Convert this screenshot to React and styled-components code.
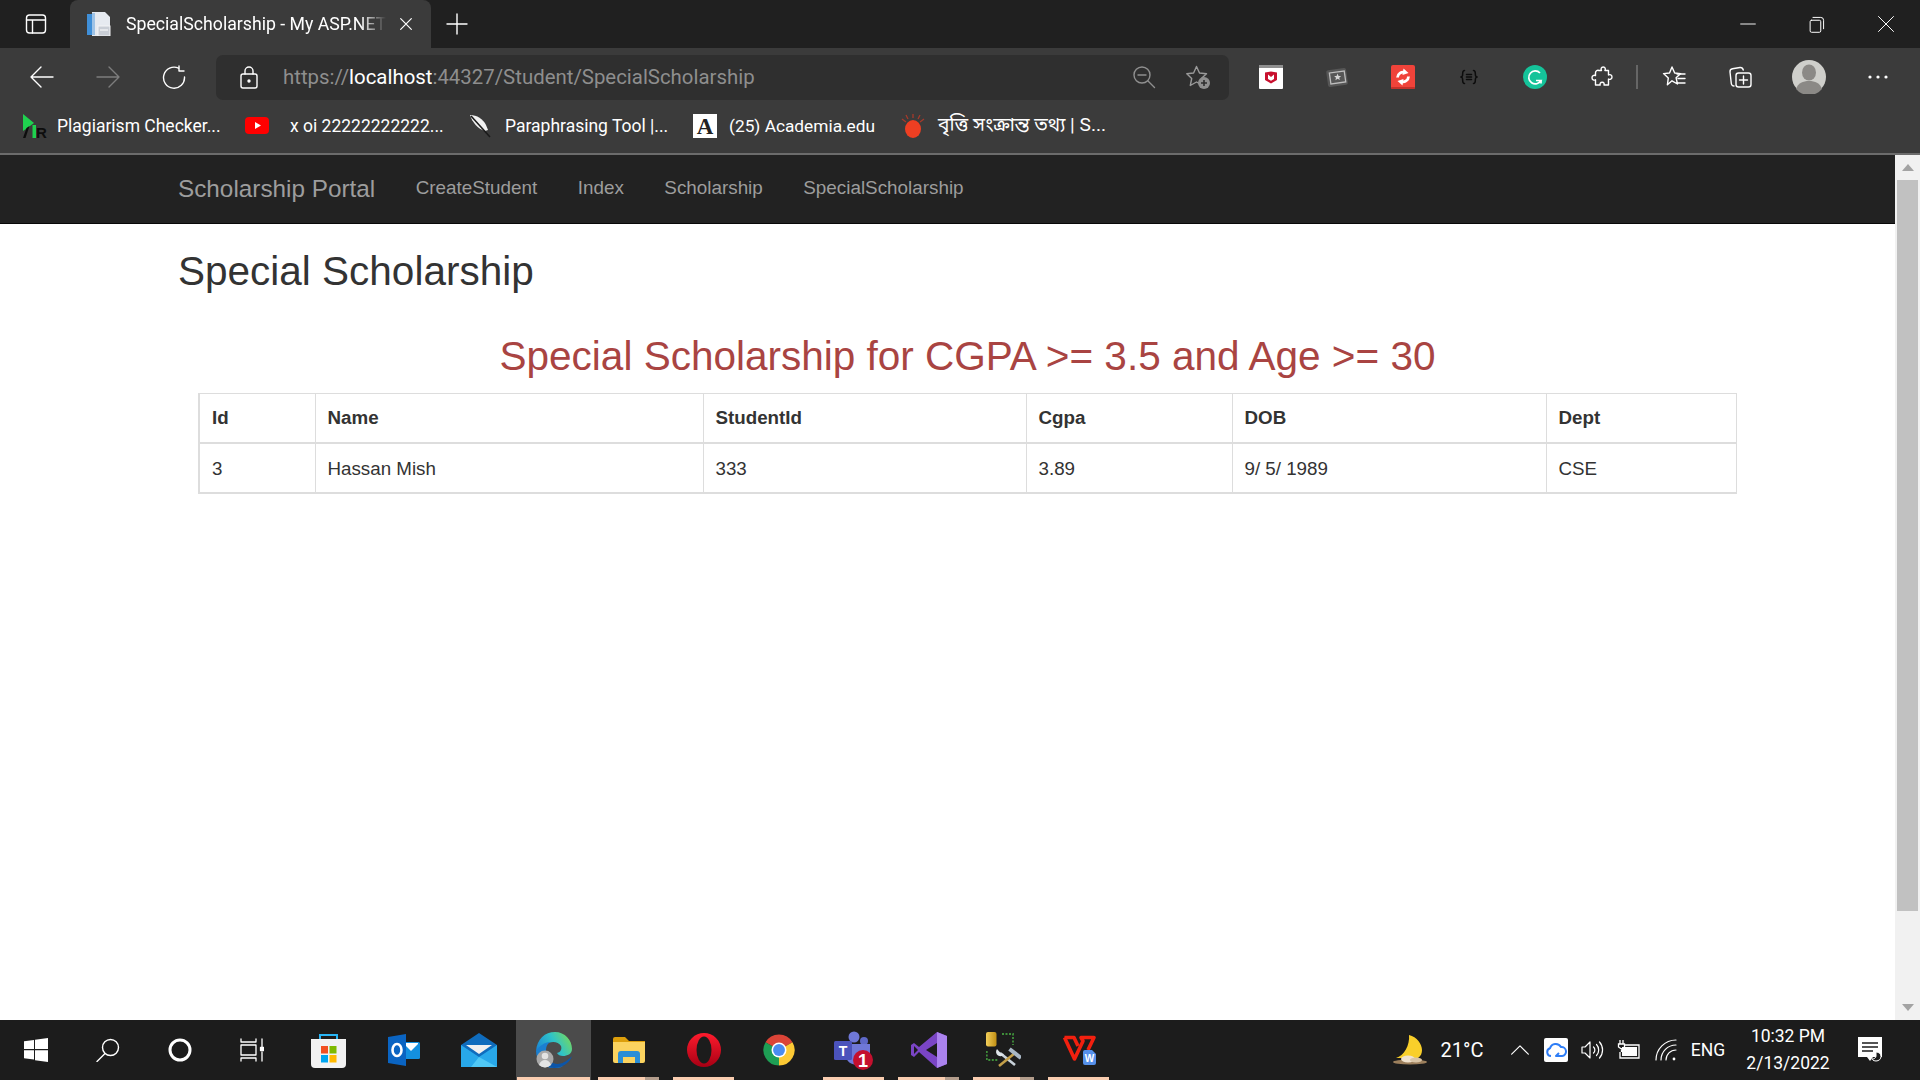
import React from 'react';
import styled, { createGlobalStyle } from 'styled-components';

const GlobalStyle = createGlobalStyle`
  html, body {
    margin: 0;
    padding: 0;
    background: #fff;
    overflow: hidden;
  }
  * {
    box-sizing: border-box;
  }
`;

const Page = styled.div`
  height: 100vh;
  display: flex;
  flex-direction: column;
  overflow: hidden;
  font-family: "Liberation Sans", Arial, sans-serif;
`;

/* browser chrome */

const TitleBar = styled.div`
  height: 48px;
  flex: none;
  display: flex;
  background: #202020;
`;

const TabsButton = styled.div`
  width: 70px;
  padding-left: 24px;
  display: flex;
  align-items: center;
`;

const Tab = styled.div`
  width: 361px;
  padding-left: 17px;
  display: flex;
  align-items: center;
  background: #3b3b3b;
  border-radius: 8px 8px 0 0;
`;

const TabTitle = styled.div`
  width: 260px;
  margin-left: 15px;
  overflow: hidden;
  white-space: nowrap;
  color: #fff;
  font: 17.7px Roboto, sans-serif;
  -webkit-mask-image: linear-gradient(to right, #000 90%, transparent 100%);
  mask-image: linear-gradient(to right, #000 90%, transparent 100%);
`;

const TabClose = styled.div`
  width: 40px;
  display: flex;
  justify-content: center;
`;

const NewTab = styled.div`
  width: 52px;
  display: flex;
  align-items: center;
  justify-content: center;
`;

const Spacer = styled.div`
  flex: 1;
`;

const WindowButton = styled.div`
  width: 69px;
  display: flex;
  align-items: center;
  justify-content: center;
`;

const Toolbar = styled.div`
  height: 58px;
  flex: none;
  padding: 0 9px;
  display: flex;
  align-items: center;
  background: #3b3b3b;
`;

const ToolButton = styled.div`
  width: ${p => p.$w || 66}px;
  flex: none;
  display: flex;
  align-items: center;
  justify-content: center;
`;

const ToolDivider = styled.div`
  width: 2px;
  height: 24px;
  margin-right: 3px;
  flex: none;
  background: #666;
`;

const AddressBar = styled.div`
  flex: 1;
  height: 45px;
  margin: 0 9px;
  padding: 0 19px 0 21px;
  display: flex;
  align-items: center;
  background: #2f2f2f;
  border-radius: 7px;
`;

const Url = styled.div`
  flex: 1;
  margin-left: 22px;
  color: #8e8e8e;
  font: 20.4px Roboto, sans-serif;
  white-space: nowrap;
`;

const UrlHost = styled.span`
  color: #fff;
`;

const AddressActions = styled.div`
  display: flex;
  gap: 30px;
`;

const BookmarkBar = styled.div`
  height: 49px;
  flex: none;
  padding: 0 0 7px 21px;
  display: flex;
  align-items: center;
  gap: 25px;
  background: #3b3b3b;
  border-bottom: 2px solid #6c6c6c;
`;

const Bookmark = styled.div`
  display: flex;
  align-items: center;
  gap: ${p => p.$gap || 12}px;
`;

const BookmarkLabel = styled.span`
  width: ${p => p.$w}px;
  color: #fff;
  font: ${p => p.$size || 17.5}px Roboto, "Noto Sans", "Noto Sans Bengali", sans-serif;
  white-space: nowrap;
`;

/* the page inside the browser */

const Viewport = styled.div`
  flex: 1;
  min-height: 0;
  display: flex;
  background: #fff;
`;

const Site = styled.div`
  flex: 1;
  min-width: 0;
`;

const Navbar = styled.nav`
  height: 69px;
  padding: 0 0 2px 178px;
  display: flex;
  align-items: center;
  gap: 40.5px;
  background: #222;
  border-bottom: 1px solid #080808;
`;

const Brand = styled.a`
  padding-top: 2px;
  color: #9d9d9d;
  font-size: 24.3px;
`;

const NavLink = styled.a`
  color: #9d9d9d;
  font-size: 18.85px;
`;

const Content = styled.main`
  padding: 25px 138px 0 178px;
  color: #333;
`;

const PageTitle = styled.h2`
  margin: 0 0 41px;
  font-size: 40.5px;
  line-height: 44px;
  font-weight: 400;
`;

const SubTitle = styled.h2`
  margin: 0 0 15px;
  color: #a94442;
  font-size: 40.5px;
  line-height: 44px;
  font-weight: 400;
  text-align: center;
`;

const Table = styled.table`
  width: 1537px;
  margin: 0 20px;
  table-layout: fixed;
  border-collapse: collapse;
  font-size: 18.75px;
  border: 1px solid #ddd;
  border-left-width: 2px;
  border-bottom-width: 2px;
`;

const Col = styled.col`
  width: ${p => p.$w}px;
`;

const Th = styled.th`
  height: 49px;
  padding: 1px 11px 0 12px;
  text-align: left;
  font-weight: 700;
  border: 1px solid #ddd;
  border-bottom-width: 2px;
`;

const Td = styled.td`
  height: 50px;
  padding: 2px 11px 0 12px;
  border: 1px solid #ddd;
  border-bottom-width: 2px;
`;

const Scrollbar = styled.div`
  width: 25px;
  flex: none;
  display: flex;
  flex-direction: column;
  align-items: center;
  background: #f1f1f1;
`;

const ScrollArrow = styled.div`
  height: 25px;
  flex: none;
  display: flex;
  align-items: center;
  justify-content: center;
  margin-top: ${p => (p.$end ? 'auto' : 0)};
`;

const ScrollThumb = styled.div`
  width: 21px;
  height: 731px;
  flex: none;
  background: #c1c1c1;
`;

/* windows taskbar */

const Taskbar = styled.footer`
  height: 60px;
  flex: none;
  display: flex;
  background: #1c1c1c;
`;

const ShellButton = styled.div`
  width: 72px;
  display: flex;
  align-items: center;
  justify-content: center;
`;

const AppList = styled.div`
  margin-left: 3px;
  display: flex;
`;

const AppButton = styled.div`
  position: relative;
  width: 75px;
  display: flex;
  align-items: center;
  justify-content: center;
  background: ${p => (p.$active ? '#4b4b4b' : 'transparent')};

  &::after {
    content: '';
    display: ${p => (p.$running ? 'block' : 'none')};
    position: absolute;
    bottom: 0;
    left: ${p => (p.$active ? 1 : 7)}px;
    right: ${p => (p.$active ? 1 : 7)}px;
    height: 3px;
    background: ${p =>
      p.$stacked
        ? 'linear-gradient(to right, #f9cdb0 77%, #b39d8c 77%)'
        : '#f9cdb0'};
  }
`;

const Tray = styled.div`
  margin-left: auto;
  padding-right: 35px;
  display: flex;
  align-items: center;
`;

const TrayItem = styled.div`
  width: ${p => p.$w || 30}px;
  margin-left: ${p => p.$ml || 6}px;
  display: flex;
  align-items: center;
  justify-content: center;
  color: #fff;
  font: ${p => p.$size || 18}px Roboto, sans-serif;
  white-space: nowrap;
`;

const Clock = styled.div`
  width: 100px;
  margin-left: 13px;
  color: #fff;
  font: 17.5px/27px Roboto, sans-serif;
  text-align: center;
`;

/* icons */

const Line = ({ size = 24, color = '#fff', width = 1.4, children }) => (
  <svg
    width={size}
    height={size}
    viewBox="0 0 24 24"
    fill="none"
    stroke={color}
    strokeWidth={width}
    strokeLinecap="round"
    strokeLinejoin="round"
  >
    {children}
  </svg>
);

const Art = ({ w = 24, h = 24, box, children }) => (
  <svg width={w} height={h} viewBox={box || `0 0 ${w} ${h}`}>
    {children}
  </svg>
);

const TabsIcon = () => (
  <Line>
    <rect x="2.5" y="3" width="19" height="18" rx="3" />
    <path d="M2.5 8h19M8.5 8v13" />
  </Line>
);

const PageFavicon = () => (
  <Art>
    <rect x="0" y="2" width="7" height="21" fill="#3f8fd8" />
    <path d="M5 0h13l5 5v19H5z" fill="#e6eaf0" />
    <rect x="5" y="1" width="3" height="22" fill="#9fc3e6" />
    <rect x="11" y="14" width="12" height="10" fill="#c9ced6" stroke="#f3f4f6" />
    <path d="M13 18h8" stroke="#fff" />
  </Art>
);

const ShieldTileIcon = () => (
  <Art>
    <rect width="24" height="24" rx="1" fill="#fff" />
    <rect width="24" height="3" fill="#8f8f8f" />
    <path d="M6 7.500l6-1 6 1V15l-6 3.500L6 15z" fill="#c8102e" />
    <path d="M9 9.500l3 2.500 3-2.500v4.500l-3 1.800L9 14z" fill="#fff" />
  </Art>
);

const StarPhotoIcon = () => (
  <Art>
    <rect x="2" y="4" width="20" height="17" rx="2" fill="#565656" transform="rotate(-8 12 12)" />
    <rect x="5" y="7" width="15" height="11" fill="none" stroke="#bdbdbd" strokeWidth="1.3" transform="rotate(-8 12 12)" />
    <path d="M12.5 8.6l1.1 2.3 2.5.2-1.9 1.6.6 2.4-2.2-1.3-2.2 1.4.6-2.5-1.9-1.6 2.5-.2z" fill="#d4d4d4" />
  </Art>
);

const SyncIcon = () => (
  <Art>
    <rect width="24" height="24" rx="2" fill="#f0433a" />
    <rect y="22" width="24" height="2" rx="1" fill="#c4312a" />
    <path d="M6.500 12.500a5.500 5.500 0 0 1 7.500-5" fill="none" stroke="#fff" strokeWidth="2.800" />
    <path d="M12.500 3.500l5 4.500-6 2z" fill="#fff" />
    <path d="M17.500 11.500a5.500 5.500 0 0 1-7.500 5" fill="none" stroke="#fff" strokeWidth="2.800" />
    <path d="M11.500 20.500l-5-4.500 6-2z" fill="#fff" />
  </Art>
);

const JsonIcon = () => (
  <Line color="#0c0c0c" width="1.5">
    <path d="M7.5 5.5c-2.5 0-1.5 3-2 5-.2 1-1 1.500-1.700 1.500.7 0 1.500.5 1.700 1.500.5 2-.5 5 2 5" />
    <path d="M16.500 5.500c2.500 0 1.500 3 2 5 .2 1 1 1.500 1.700 1.500-.7 0-1.500.5-1.700 1.500-.5 2 .5 5-2 5" />
    <path d="M9.500 9.500h5M9.500 12h5M9.500 14.500h5" />
  </Line>
);

const GrammarlyIcon = () => (
  <Art>
    <circle cx="12" cy="12" r="12" fill="#15c39a" />
    <path d="M17 8a6.500 6.500 0 1 0 1 7.500h-5" fill="none" stroke="#fff" strokeWidth="1.700" />
    <path d="M18 15.500v3" stroke="#fff" strokeWidth="1.700" />
  </Art>
);

const PuzzleIcon = () => (
  <Line>
    <path d="M9 5.500h2.500c-.8-1.300-.5-3.500 1.700-3.500s2.500 2.200 1.700 3.500h3.600v4.500c1.300-.8 3.500-.3 3.500 2s-2.200 2.800-3.500 2v6h-4.500c.5-1.300 0-2.800-1.800-2.800s-2.500 1.500-2 2.800H5.500v-5.200c-1.500.8-3.500 0-3.500-2.100s2-2.900 3.500-2.100V8a2.500 2.500 0 0 1 3.500-2.500z" />
  </Line>
);

const ZoomOutIcon = () => (
  <Line color="#8f8f8f">
    <circle cx="10" cy="10" r="8" />
    <path d="M6 10h8M16 16l6.500 6.500" />
  </Line>
);

const StarAddIcon = () => (
  <Art>
    <path
      d="M10.500 1.500l3 6.500 7 .8-5.200 4.700 1.400 7-6.200-3.500L4.300 20.500l1.400-7L.8 8.800l6.800-.8z"
      fill="none"
      stroke="#9a9a9a"
      strokeWidth="1.400"
      strokeLinejoin="round"
    />
    <circle cx="18" cy="18" r="6" fill="#8f8f8f" />
    <path d="M18 15v6M15 18h6" stroke="#2f2f2f" strokeWidth="1.600" />
  </Art>
);

const FavoritesIcon = () => (
  <Line>
    <path d="M10 2l2.700 6 6 .6-4.600 4.200 1.400 6.200-5.500-3.200-4.600 4 .9-6.900L1.500 8.600l6-.6z" />
    <path d="M15 9h8M16 13.500h7M15 18h8" />
  </Line>
);

const CollectionsIcon = () => (
  <Line>
    <path d="M6 21c-2 0-2.500-1-2.700-2.500L2 7c-.2-2 .7-3 2.500-3.300L12 2.500c1.700-.2 2.800.6 3.300 2.500" />
    <rect x="8" y="8" width="15" height="14" rx="2.500" />
    <path d="M15.500 11v8M11.500 15h8" />
  </Line>
);

const AvatarIcon = () => (
  <Art w={34} h={34}>
    <circle cx="17" cy="17" r="17" fill="#cfcfcb" />
    <ellipse cx="17" cy="12.500" rx="7" ry="8" fill="#8b8986" />
    <path d="M4 29c2-6 7-8 13-8s11 2 13 8a17 17 0 0 1-26 0z" fill="#8b8986" />
  </Art>
);

const PrLogo = () => (
  <Art w={26} h={25}>
    <path d="M2 0l11 9-8 6-3 2z" fill="#1fd14f" />
    <rect x="11.500" y="11" width="3.500" height="13" fill="#1fd14f" />
    <path d="M8.500 12L4.500 24H2l3.500-10z" fill="#0d0d0d" />
    <text x="15" y="24" fontFamily="Liberation Sans" fontWeight="700" fontSize="15" fill="#0d0d0d">R</text>
  </Art>
);

const YoutubeLogo = () => (
  <Art>
    <rect y="3" width="24" height="17" rx="4" fill="#f00" />
    <path d="M10 8l6 3.500-6 3.500z" fill="#fff" />
  </Art>
);

const FeatherLogo = () => (
  <Art>
    <path d="M2 1c7 0 13 4 16 10l2 5-3 1C10 15 4 8 2 1z" fill="#f2f2f2" />
    <path d="M3 2l19 21" stroke="#1a1a1a" strokeWidth="1.600" />
  </Art>
);

const AcademiaLogo = () => (
  <Art>
    <rect width="24" height="24" fill="#fff" />
    <text x="12" y="20" textAnchor="middle" fontFamily="Liberation Serif" fontWeight="700" fontSize="23" fill="#222">A</text>
  </Art>
);

const BulbLogo = () => (
  <Art>
    <ellipse cx="12" cy="15" rx="8" ry="9" fill="#ee3f22" />
    <path d="M12 0v4M5 1l2 4M19 1l-2 4M1 5l4 3M23 5l-4 3" stroke="#a63a2b" strokeWidth="1.300" />
  </Art>
);

const WindowsLogo = () => (
  <Art h={24}>
    <path d="M0 3.300l10-1.400V11H0zM11 1.800L24 0v11H11zM0 12.300h10v9.300L0 20.300zM11 12.300h13V24l-13-1.800z" fill="#fff" />
  </Art>
);

const SearchIcon = () => (
  <Line>
    <circle cx="14.500" cy="9.500" r="8" />
    <path d="M9 15.500L1 23.500" />
  </Line>
);

const CortanaIcon = () => (
  <Art>
    <circle cx="12" cy="12" r="10" fill="none" stroke="#fff" strokeWidth="3" />
  </Art>
);

const TaskViewIcon = () => (
  <Line width="1.300">
    <path d="M1 1v3h15V1M1 23v-3h15v3" />
    <rect x="1" y="7" width="15" height="10" />
    <path d="M22 1v8M22 14v9" />
    <rect x="20.500" y="9.500" width="3" height="3" fill="#fff" />
  </Line>
);

const StoreLogo = () => (
  <Art w={35} h={35}>
    <path d="M9 8V2h17v6" fill="none" stroke="#29b6f6" strokeWidth="2" />
    <path d="M0 6h35v25a4 4 0 0 1-4 4H4a4 4 0 0 1-4-4z" fill="#f2f2f2" />
    <rect x="10" y="13" width="7" height="7.500" fill="#f25022" />
    <rect x="18.500" y="13" width="7" height="7.500" fill="#7fba00" />
    <rect x="10" y="22" width="7" height="7.500" fill="#00a4ef" />
    <rect x="18.500" y="22" width="7" height="7.500" fill="#ffb900" />
  </Art>
);

const OutlookLogo = () => (
  <Art w={32} h={32}>
    <rect x="14" y="8" width="18" height="17" rx="1.500" fill="#1490df" />
    <path d="M16 10l7 7 7-7v-1H16z" fill="#fff" />
    <path d="M0 3l18-3v32L0 29z" fill="#0a64c2" />
    <ellipse cx="9" cy="16" rx="4.500" ry="6" fill="none" stroke="#fff" strokeWidth="2.600" />
  </Art>
);

const MailLogo = () => (
  <Art w={36} h={34}>
    <path d="M0 12L18 0l18 12v22H0z" fill="#0f6cbd" />
    <path d="M5 12h26l-13 9z" fill="#f0f0f0" />
    <path d="M0 12l18 12 18-12v22H0z" fill="#28a8ea" />
    <path d="M18 24l18 10H10z" fill="#50c8f5" />
  </Art>
);

const EdgeLogo = () => (
  <Art w={36} h={36}>
    <defs>
      <linearGradient id="edgeTop" x1="0" y1="0.700" x2="1" y2="0.300">
        <stop offset="0" stopColor="#1a86d6" />
        <stop offset="0.550" stopColor="#2fc3c8" />
        <stop offset="1" stopColor="#74d85f" />
      </linearGradient>
    </defs>
    <path d="M0 19C1 7 9 0 19 0c10 0 17 8 17 17 0 5-5 7-9 7-3 0-5-1-6-3 4-1 5-4 4-7-3-5-11-5-16-1-4 3-7 5-9 6z" fill="url(#edgeTop)" />
    <path d="M0 19c3-5 9-9 14-9-4 3-5 8-3 13 2 7 10 13 16 11-3 2-6 2-9 2C8 36 0 29 0 19z" fill="#1b7fd0" />
    <path d="M12 27c4 6 14 8 24-3-2 6-9 12-18 12-3 0-5-1-7-2z" fill="#0c55a8" />
    <circle cx="9" cy="27" r="8.500" fill="#a9a9a9" />
    <circle cx="9" cy="24" r="3.300" fill="#e3e3e3" />
    <path d="M3 33c1-3.500 3.500-5 6-5s5 1.500 6 5a8.500 8.500 0 0 1-12 0z" fill="#e3e3e3" />
  </Art>
);

const ExplorerLogo = () => (
  <Art w={32} h={26}>
    <path d="M0 2a2 2 0 0 1 2-2h10l4 4h16v6H0z" fill="#dd9f0b" />
    <path d="M0 5h32v19a2 2 0 0 1-2 2H2a2 2 0 0 1-2-2z" fill="#fbd35f" />
    <path d="M5 26V17a3 3 0 0 1 3-3h16a3 3 0 0 1 3 3v9h-5v-6H10v6z" fill="#2b8ed6" />
  </Art>
);

const OperaLogo = () => (
  <Art w={34} h={34}>
    <defs>
      <linearGradient id="operaRed" x1="0" y1="0" x2="0" y2="1">
        <stop offset="0" stopColor="#ff1b2d" />
        <stop offset="1" stopColor="#a70014" />
      </linearGradient>
    </defs>
    <circle cx="17" cy="17" r="17" fill="url(#operaRed)" />
    <ellipse cx="17" cy="17" rx="7.500" ry="13.500" fill="#1c1c1c" />
  </Art>
);

const ChromeLogo = () => (
  <Art w={34} h={34} box="0 0 24 24">
    <path d="M12 12l9.530-5.500A11 11 0 0 0 2.470 6.500z" fill="#db4437" />
    <path d="M12 12l9.530-5.500A11 11 0 0 1 12 23z" fill="#fcc934" />
    <path d="M12 12v11A11 11 0 0 1 2.470 6.500z" fill="#1e9e54" />
    <circle cx="12" cy="12" r="5.300" fill="#fff" />
    <circle cx="12" cy="12" r="4.200" fill="#4a8cf0" />
  </Art>
);

const TeamsLogo = () => (
  <Art w={40} h={40}>
    <circle cx="20" cy="7" r="5.500" fill="#6f78d8" />
    <circle cx="30" cy="11" r="4" fill="#5f69c9" />
    <path d="M12 14h24v12c0 5-5 9-12 9s-12-4-12-9z" fill="#6f78d8" />
    <rect x="0" y="11" width="18" height="19" rx="1.500" fill="#4b53bc" />
    <text x="9" y="26" textAnchor="middle" fontFamily="Liberation Sans" fontWeight="700" fontSize="14" fill="#fff">T</text>
    <ellipse cx="29" cy="30" rx="10" ry="10" fill="#c4102e" />
    <text x="29" y="37" textAnchor="middle" fontFamily="Liberation Sans" fontWeight="700" fontSize="18" fill="#fff">1</text>
  </Art>
);

const StudioLogo = () => (
  <Art w={36} h={36}>
    <path d="M26 0l10 4v28l-10 4L8 20 3 25l-3-2V13l3-2 5 4z" fill="#7a45c5" />
    <path d="M26 0l10 4v28l-10 4z" fill="#ab83ee" />
    <path d="M26 11L15 18l11 7z" fill="#1c1c1c" />
    <path d="M3 14l4 4-4 4z" fill="#1c1c1c" />
  </Art>
);

const ToolsLogo = () => (
  <Art w={35} h={36}>
    <defs>
      <linearGradient id="drum" x1="0" y1="0" x2="1" y2="0">
        <stop offset="0" stopColor="#f3cf5a" />
        <stop offset="1" stopColor="#c18f14" />
      </linearGradient>
    </defs>
    <rect x="0" y="0" width="10.500" height="14.500" rx="2" fill="url(#drum)" />
    <path d="M16 2h11v11M0.800 19v9h11" fill="none" stroke="#3f8f3a" strokeWidth="1.800" strokeDasharray="2 1.500" />
    <path d="M14 21l15 12" stroke="#c9d2da" strokeWidth="2.600" />
    <path d="M29 21L13 34" stroke="#c4a04a" strokeWidth="2.600" />
    <path d="M23.500 17L35 26" stroke="#a9b8c6" strokeWidth="4" />
    <path d="M11 17a4.500 4.500 0 0 0 1 6.500 4.500 4.500 0 0 0 6-1.500l-3-.5z" fill="#dfe5ea" />
  </Art>
);

const WpsLogo = () => (
  <Art w={34} h={30}>
    <g fill="none" stroke="#f2200f" strokeWidth="3.600" strokeLinejoin="round">
      <path d="M2.500 2.500H12L16 11" />
      <path d="M2.500 2.500L12.500 24 21 6l-2-3.500h13L26 15" />
    </g>
    <path d="M21 17a2 2 0 0 1 2-2h7l4 4v9a2 2 0 0 1-2 2h-9a2 2 0 0 1-2-2z" fill="#5590ea" />
    <text x="27.500" y="27" textAnchor="middle" fontFamily="Liberation Sans" fontWeight="700" fontSize="10" fill="#fff">W</text>
  </Art>
);

const MoonLogo = () => (
  <Art w={36} h={30}>
    <path d="M17 0c8 2 13 9 13 15 0 3-1 6-4 8H4c8-2 14-13 13-23z" fill="#f9cf2a" />
    <ellipse cx="18" cy="27" rx="17" ry="2.500" fill="#9c7f5c" />
    <ellipse cx="16" cy="24" rx="7" ry="3.500" fill="#f0e2ce" />
    <ellipse cx="24" cy="25" rx="6" ry="2.500" fill="#d9c4a6" />
  </Art>
);

const CloudTile = () => (
  <Art>
    <rect width="24" height="24" rx="2" fill="#fff" />
    <path d="M7 18a4 4 0 0 1-1-7.800A6 6 0 0 1 17 9a4.500 4.500 0 0 1 1 9h-6l3-3" fill="none" stroke="#2e7df6" strokeWidth="2" strokeLinejoin="round" />
  </Art>
);

const SpeakerIcon = () => (
  <Line width="1.200">
    <path d="M2 9h3l5-5v16l-5-5H2z" />
    <path d="M13.500 9a4 4 0 0 1 0 6M16.500 6.500a8 8 0 0 1 0 11M19.500 4a12 12 0 0 1 0 16" />
  </Line>
);

const BatteryIcon = () => (
  <Art>
    <path d="M4 2v4M7 2v4M2.500 6h6v3l-3 2-3-2zM5.500 11v3" fill="none" stroke="#fff" strokeWidth="1.300" />
    <path d="M9 7h14v13H4v-6" fill="none" stroke="#fff" strokeWidth="1.300" />
    <rect x="6" y="9" width="15" height="9" fill="#fff" />
  </Art>
);

const WifiIcon = () => (
  <Line width="1.200">
    <path d="M2 22A20 20 0 0 1 22 2M7 22A15 15 0 0 1 22 7M12 22A10 10 0 0 1 22 12" />
    <circle cx="20" cy="21" r="1.400" fill="#fff" stroke="none" />
  </Line>
);

const NotifyIcon = () => (
  <Art h={26}>
    <path d="M0 0h24v20h-9l-3 4-3-4H0z" fill="#fff" />
    <path d="M4 6h16M4 10h16M4 14h11" stroke="#1c1c1c" strokeWidth="1.300" />
    <path d="M18 15c3 0 5 2 5 4.500S21 24 18 24s-4-2-4-2c2 0 4-1 4-3z" fill="#1c1c1c" stroke="#fff" />
  </Art>
);

const Triangle = ({ down }) => (
  <Art w={12} h={7}>
    <path d={down ? 'M0 0h12L6 7z' : 'M6 0l6 7H0z'} fill="#a3a3a3" />
  </Art>
);

const columns = [116, 388, 323, 206, 314, 190];
const headers = ['Id', 'Name', 'StudentId', 'Cgpa', 'DOB', 'Dept'];
const student = ['3', 'Hassan Mish', '333', '3.89', '9/ 5/ 1989', 'CSE'];

const navItems = ['CreateStudent', 'Index', 'Scholarship', 'SpecialScholarship'];

export default function App() {
  return (
    <Page>
      <GlobalStyle />
      <TitleBar>
        <TabsButton>
          <TabsIcon />
        </TabsButton>
        <Tab>
          <PageFavicon />
          <TabTitle>SpecialScholarship - My ASP.NET Application</TabTitle>
          <TabClose>
            <Line size={16} width={1.8}>
              <path d="M4 4l16 16M20 4L4 20" />
            </Line>
          </TabClose>
        </Tab>
        <NewTab>
          <Line>
            <path d="M12 2v20M2 12h20" />
          </Line>
        </NewTab>
        <Spacer />
        <WindowButton>
          <Line size={16}>
            <path d="M1 12h22" />
          </Line>
        </WindowButton>
        <WindowButton>
          <Line size={17}>
            <rect x="3" y="6" width="15" height="17" rx="2" />
            <path d="M7 2h11a4 4 0 0 1 4 4v12" />
          </Line>
        </WindowButton>
        <WindowButton>
          <Line size={18} width={1.3}>
            <path d="M2 2l20 20M22 2L2 22" />
          </Line>
        </WindowButton>
      </TitleBar>

      <Toolbar>
        <ToolButton>
          <Line>
            <path d="M23 12H1M11 2L1 12l10 10" />
          </Line>
        </ToolButton>
        <ToolButton>
          <Line color="#7d7d7d">
            <path d="M1 12h22M13 2l10 10-10 10" />
          </Line>
        </ToolButton>
        <ToolButton>
          <Line>
            <path d="M16.500 3.200A10.500 10.500 0 1 0 22.500 12" />
            <path d="M17 1v5h5" />
          </Line>
        </ToolButton>
        <AddressBar>
          <Line>
            <rect x="4" y="9" width="16" height="14" rx="2" />
            <path d="M8 9V6a4 4 0 0 1 8 0v3" />
            <circle cx="12" cy="16" r="1" fill="#fff" />
          </Line>
          <Url>
            https://<UrlHost>localhost</UrlHost>:44327/Student/SpecialScholarship
          </Url>
          <AddressActions>
            <ZoomOutIcon />
            <StarAddIcon />
          </AddressActions>
        </AddressBar>
        <ToolButton>
          <ShieldTileIcon />
        </ToolButton>
        <ToolButton>
          <StarPhotoIcon />
        </ToolButton>
        <ToolButton>
          <SyncIcon />
        </ToolButton>
        <ToolButton>
          <JsonIcon />
        </ToolButton>
        <ToolButton>
          <GrammarlyIcon />
        </ToolButton>
        <ToolButton $w={68}>
          <PuzzleIcon />
        </ToolButton>
        <ToolDivider />
        <ToolButton>
          <FavoritesIcon />
        </ToolButton>
        <ToolButton>
          <CollectionsIcon />
        </ToolButton>
        <ToolButton $w={72}>
          <AvatarIcon />
        </ToolButton>
        <ToolButton>
          <Line>
            <circle cx="4" cy="12" r="1.600" fill="#fff" stroke="none" />
            <circle cx="12" cy="12" r="1.600" fill="#fff" stroke="none" />
            <circle cx="20" cy="12" r="1.600" fill="#fff" stroke="none" />
          </Line>
        </ToolButton>
      </Toolbar>

      <BookmarkBar>
        <Bookmark $gap={10}>
          <PrLogo />
          <BookmarkLabel $w={163}>Plagiarism Checker...</BookmarkLabel>
        </Bookmark>
        <Bookmark $gap={21}>
          <YoutubeLogo />
          <BookmarkLabel $w={153}>x oi 22222222222...</BookmarkLabel>
        </Bookmark>
        <Bookmark $gap={13}>
          <FeatherLogo />
          <BookmarkLabel $w={163}>Paraphrasing Tool |...</BookmarkLabel>
        </Bookmark>
        <Bookmark>
          <AcademiaLogo />
          <BookmarkLabel $w={147} $size={17.3}>(25) Academia.edu</BookmarkLabel>
        </Bookmark>
        <Bookmark $gap={13}>
          <BulbLogo />
          <BookmarkLabel $w={167} $size={19.2}>বৃত্তি সংক্রান্ত তথ্য | S...</BookmarkLabel>
        </Bookmark>
      </BookmarkBar>

      <Viewport>
        <Site>
          <Navbar>
            <Brand>Scholarship Portal</Brand>
            {navItems.map(item => (
              <NavLink key={item}>{item}</NavLink>
            ))}
          </Navbar>
          <Content>
            <PageTitle>Special Scholarship</PageTitle>
            <SubTitle>Special Scholarship for CGPA &gt;= 3.5 and Age &gt;= 30</SubTitle>
            <Table>
              <colgroup>
                {columns.map((w, i) => (
                  <Col key={i} $w={w} />
                ))}
              </colgroup>
              <thead>
                <tr>
                  {headers.map(h => (
                    <Th key={h}>{h}</Th>
                  ))}
                </tr>
              </thead>
              <tbody>
                <tr>
                  {student.map((v, i) => (
                    <Td key={i}>{v}</Td>
                  ))}
                </tr>
              </tbody>
            </Table>
          </Content>
        </Site>
        <Scrollbar>
          <ScrollArrow>
            <Triangle />
          </ScrollArrow>
          <ScrollThumb />
          <ScrollArrow $end>
            <Triangle down />
          </ScrollArrow>
        </Scrollbar>
      </Viewport>

      <Taskbar>
        <ShellButton>
          <WindowsLogo />
        </ShellButton>
        <ShellButton>
          <SearchIcon />
        </ShellButton>
        <ShellButton>
          <CortanaIcon />
        </ShellButton>
        <ShellButton>
          <TaskViewIcon />
        </ShellButton>
        <AppList>
          <AppButton>
            <StoreLogo />
          </AppButton>
          <AppButton>
            <OutlookLogo />
          </AppButton>
          <AppButton>
            <MailLogo />
          </AppButton>
          <AppButton $active $running>
            <EdgeLogo />
          </AppButton>
          <AppButton $running $stacked>
            <ExplorerLogo />
          </AppButton>
          <AppButton $running>
            <OperaLogo />
          </AppButton>
          <AppButton>
            <ChromeLogo />
          </AppButton>
          <AppButton $running>
            <TeamsLogo />
          </AppButton>
          <AppButton $running $stacked>
            <StudioLogo />
          </AppButton>
          <AppButton $running $stacked>
            <ToolsLogo />
          </AppButton>
          <AppButton $running>
            <WpsLogo />
          </AppButton>
        </AppList>
        <Tray>
          <TrayItem $w={36}>
            <MoonLogo />
          </TrayItem>
          <TrayItem $w={44} $ml={12} $size={20}>
            21°C
          </TrayItem>
          <TrayItem $ml={21}>
            <Line size={20}>
              <path d="M2 17l10-10 10 10" />
            </Line>
          </TrayItem>
          <TrayItem>
            <CloudTile />
          </TrayItem>
          <TrayItem>
            <SpeakerIcon />
          </TrayItem>
          <TrayItem>
            <BatteryIcon />
          </TrayItem>
          <TrayItem $ml={8}>
            <WifiIcon />
          </TrayItem>
          <TrayItem $w={34} $ml={10} $size={17.5}>
            ENG
          </TrayItem>
          <Clock>
            10:32 PM
            <br />
            2/13/2022
          </Clock>
          <TrayItem $ml={17}>
            <NotifyIcon />
          </TrayItem>
        </Tray>
      </Taskbar>
    </Page>
  );
}
